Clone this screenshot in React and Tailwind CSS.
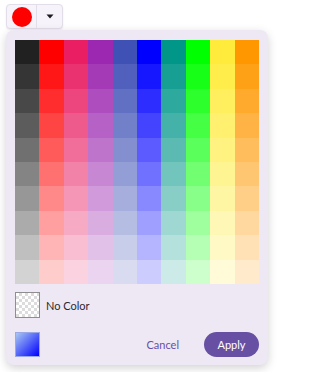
import React from "react";

const BASE = [
  [0x21, 0x21, 0x21],
  [0xff, 0x00, 0x00],
  [0xe9, 0x1e, 0x63],
  [0x9c, 0x27, 0xb0],
  [0x3f, 0x51, 0xb5],
  [0x00, 0x00, 0xff],
  [0x00, 0x96, 0x88],
  [0x00, 0xff, 0x00],
  [0xff, 0xeb, 0x3b],
  [0xff, 0x98, 0x00],
];

function mix(c, t) {
  const v = c.map((x) => Math.round(x + (255 - x) * t));
  return `rgb(${v[0]},${v[1]},${v[2]})`;
}

const cells = [];
for (let r = 0; r < 10; r++) {
  for (let c = 0; c < 10; c++) {
    cells.push(mix(BASE[c], (r * 0.8) / 9));
  }
}

export default function App() {
  return (
    <div className="w-[274px] h-[372px] bg-white relative font-['Lato',sans-serif]">
      <div className="pt-[4px] pl-[6px]">
        <div className="flex w-[57px] h-[25px] rounded-[4px] border border-[#e2dde8] bg-[#f7f3fa] shadow-[0_1px_2px_rgba(0,0,0,0.08)]">
          <div className="w-[30px] flex items-center justify-center border-r border-[#e2dde8]">
            <div className="w-[20px] h-[20px] rounded-full bg-[#ff0000]" />
          </div>
          <div className="flex-1 flex items-center justify-center">
            <svg width="8" height="5" viewBox="0 0 8 5">
              <path d="M0.5 0.5 L7.5 0.5 L4 4.5 Z" fill="#1c1b1f" />
            </svg>
          </div>
        </div>
      </div>
      <div className="ml-[6px] mt-[1px] w-[262px] h-[335px] rounded-[8px] bg-[#eee8f4] shadow-[0_3px_10px_rgba(0,0,0,0.18)] pt-[10px] px-[9px] flex flex-col">
        <div className="grid grid-cols-10 w-[244px] h-[244px]">
          {cells.map((col, i) => (
            <div key={i} style={{ backgroundColor: col }} />
          ))}
        </div>
        <div className="flex items-center mt-[8px] h-[26px]">
          <div className="w-[25px] h-[26px] border border-[#8e8e8e] bg-[repeating-conic-gradient(#dcdcdc_0_25%,#ffffff_0_50%)] bg-[length:6px_6px]" />
          <span className="ml-[6px] text-[11px] text-[#2b2930] leading-none">No Color</span>
        </div>
        <div className="flex items-center mt-[14px] h-[25px]">
          <div className="w-[25px] h-[25px] border border-[#9aa8e8] bg-[linear-gradient(135deg,#a9c8f2,#0000ff)]" />
          <div className="flex-1" />
          <button className="text-[11px] text-[#6750a4] mr-[25px] leading-none">Cancel</button>
          <button className="w-[55px] h-[25px] rounded-full bg-[#6750a4] text-white text-[11px] leading-none">Apply</button>
        </div>
      </div>
    </div>
  );
}
